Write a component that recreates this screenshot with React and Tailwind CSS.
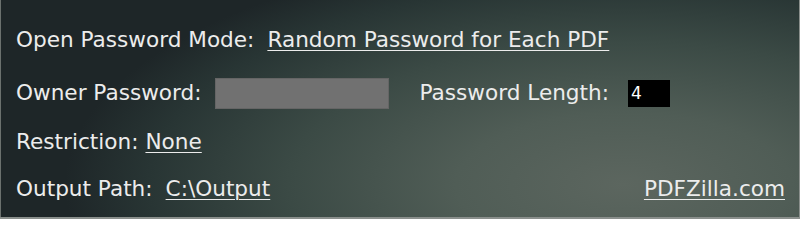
import React from "react";

const Link = ({ children }) => (
  <span className="underline underline-offset-[3px] decoration-1 cursor-pointer">{children}</span>
);

export default function App() {
  return (
    <div className="w-[800px] h-[219px] overflow-hidden bg-[#8a8f8c]">
      <div
        className="h-[217px] w-[799px] border-l border-[#6b716e] bg-[radial-gradient(ellipse_70%_110%_at_78%_85%,#5c665f_0%,#505d56_30%,#3b4a45_60%,#283534_85%,#1e2628_100%)] text-[#ececec] text-[21.6px] leading-none pl-[15px] pr-[14px] pt-[28px] flex flex-col"
        style={{ fontFamily: '"DejaVu Sans", Verdana, sans-serif' }}
      >
        <div className="flex items-center h-[24px]">
          <span>Open Password Mode:</span>
          <span className="ml-[13px]">
            <Link>Random Password for Each PDF</Link>
          </span>
        </div>

        <div className="flex items-center mt-[26px] h-[30px]">
          <span>Owner Password:</span>
          <div className="ml-[13px] w-[174px] h-[31px] bg-[#717171] border border-[#656565]" />
          <span className="ml-[31px]">Password Length:</span>
          <div className="ml-[19px] w-[42px] h-[27px] bg-black text-white text-[17px] flex items-center pl-[3px]">
            4
          </div>
        </div>

        <div className="flex items-center mt-[22px] h-[24px]">
          <span>Restriction:</span>
          <span className="ml-[7px]">
            <Link>None</Link>
          </span>
        </div>

        <div className="flex items-center mt-[23px] h-[24px]">
          <span>Output Path:</span>
          <span className="ml-[13px]">
            <Link>C:\Output</Link>
          </span>
          <span className="ml-auto">
            <Link>PDFZilla.com</Link>
          </span>
        </div>
      </div>
    </div>
  );
}
